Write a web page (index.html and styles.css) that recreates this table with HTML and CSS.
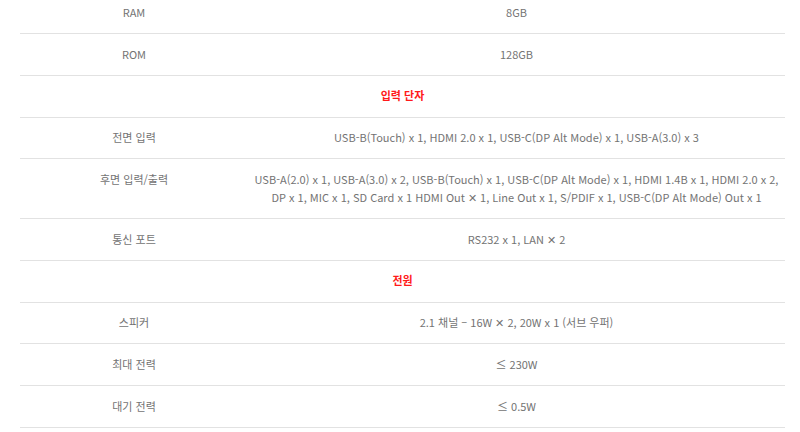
FILE: index.html
```html
<!DOCTYPE html>
<html lang="ko">
<head>
<meta charset="utf-8">
<link rel="stylesheet" href="styles.css">
</head>
<body>
<div class="wrap">
<table class="spec">
  <colgroup><col class="c-label"><col class="c-value"></colgroup>
  <tbody>
    <tr><th>RAM</th><td>8GB</td></tr>
    <tr><th>ROM</th><td>128GB</td></tr>
    <tr class="section"><td colspan="2">입력 단자</td></tr>
    <tr><th>전면 입력</th><td>USB-B(Touch) x 1, HDMI 2.0 x 1, USB-C(DP Alt Mode) x 1, USB-A(3.0) x 3</td></tr>
    <tr><th>후면 입력/출력</th><td>USB-A(2.0) x 1, USB-A(3.0) x 2, USB-B(Touch) x 1, USB-C(DP Alt Mode) x 1, HDMI 1.4B x 1, HDMI 2.0 x 2,<br>DP x 1, MIC x 1, SD Card x 1 HDMI Out ✕ 1, Line Out x 1, S/PDIF x 1, USB-C(DP Alt Mode) Out x 1</td></tr>
    <tr><th>통신 포트</th><td>RS232 x 1, LAN ✕ 2</td></tr>
    <tr class="section"><td colspan="2">전원</td></tr>
    <tr><th>스피커</th><td>2.1 채널 – 16W ✕ 2, 20W x 1 (서브 우퍼)</td></tr>
    <tr><th>최대 전력</th><td>≤ 230W</td></tr>
    <tr><th>대기 전력</th><td>≤ 0.5W</td></tr>
  </tbody>
</table>
</div>
</body>
</html>
```
FILE: styles.css
```css
html, body {
  margin: 0;
  padding: 0;
  background: #fff;
}
.wrap {
  padding-left: 20px;
  margin-top: -7.75px;
}
.spec {
  width: 765px;
  border-collapse: collapse;
  table-layout: fixed;
  font-family: "Noto Sans CJK KR", "Noto Sans", sans-serif;
  font-size: 11px;
  line-height: 18px;
  color: #737373;
}
.c-label { width: 228px; }
.spec th, .spec td {
  padding: 10.5px 0 12.25px;
  text-align: center;
  vertical-align: top;
  border-bottom: 1px solid #e2e2e2;
  font-weight: 400;
  white-space: nowrap;
}
.spec .section td {
  color: #ff1a1a;
  font-weight: 700;
}
```
